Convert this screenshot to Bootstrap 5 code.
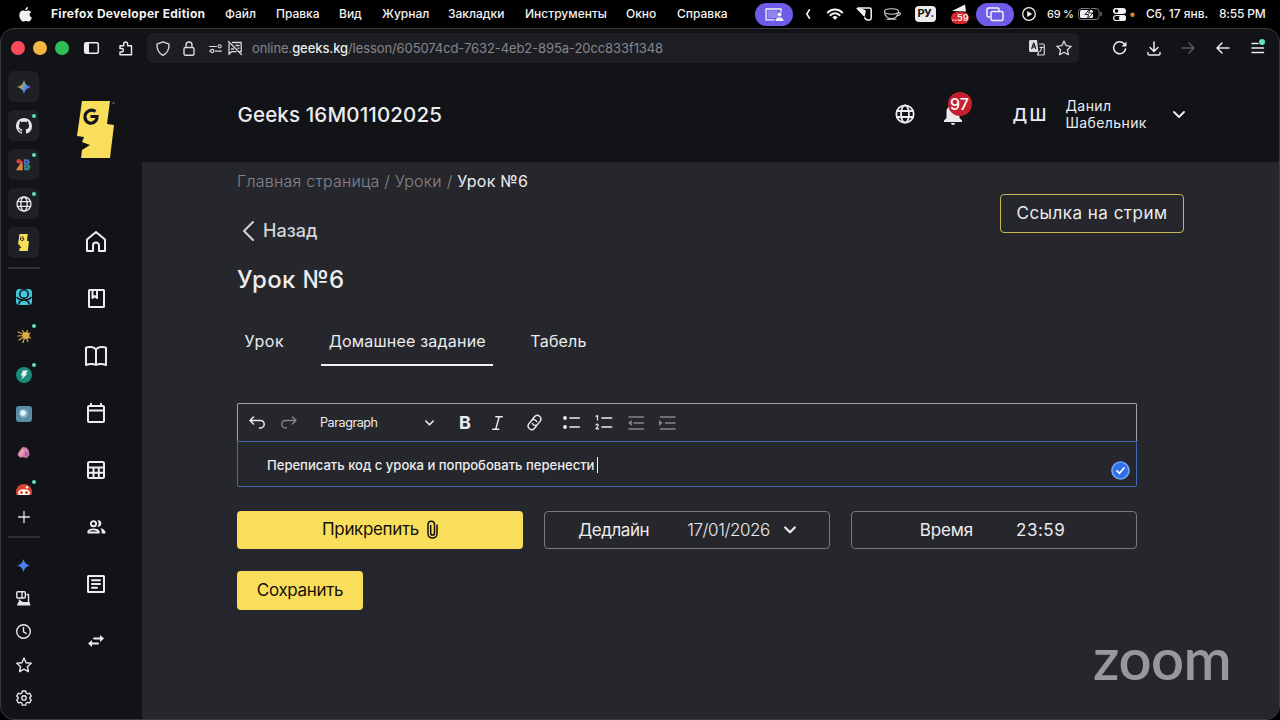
<!DOCTYPE html>
<html lang="ru">
<head>
<meta charset="utf-8">
<meta name="viewport" content="width=device-width, initial-scale=1">
<title>Geeks — Урок №6</title>
<link href="https://cdn.jsdelivr.net/npm/bootstrap@5.3.0/dist/css/bootstrap.min.css" rel="stylesheet">
<style>
  html, body { height: 720px; overflow: hidden; }
  body { background: #000; color: #ececee; font-family: Inter, "Liberation Sans", sans-serif; font-size: 14px; line-height: 1.2; }
  svg { display: block; flex: none; fill: none; stroke: currentColor; stroke-linecap: round; stroke-linejoin: round; overflow: visible; }
  .solid { fill: currentColor; stroke: none; }
  .flat { stroke: none; }
  .dim { color: #85868c; }
  .t { display: inline-block; white-space: nowrap; }

  /* system menu bar */
  .menubar { display: grid; height: 28px; padding-left: 19px; align-items: center; font-size: 12px; font-weight: 500; color: #f2f2f2;
    grid-template-columns: 32px 174px 51px 63px 43px 66px 77px 101px 51px 78px 50px 22px 29px 28px 31px 36px 25px 46px 25px 31px 35px 33px 73px 1fr; }
  .appname { font-weight: 700; letter-spacing: .3px; }
  .charge { font-size: 11px; letter-spacing: -.3px; }
  .clock { letter-spacing: -.2px; }
  .pill { width: 38px; height: 23px; border-radius: 12px; background: #6c5ce7; display: grid; place-items: center; }
  .lang { width: 21px; height: 16px; border-radius: 4px; background: #ececec; color: #111; font-size: 11px; font-weight: 700; display: grid; place-items: center; }
  .lang .t { letter-spacing: -.5px; }
  .flagico { width: 18px; height: 20px; }
  .flagico b { position: absolute; left: 0; bottom: 0; width: 18px; height: 12px; border-radius: 6px; background: #d8252e; font-size: 9px; line-height: 12px; text-align: center; font-weight: 600; }

  /* browser window */
  .win { height: 692px; border: 1px solid #3a3b40; border-radius: 14px; background: #121317; overflow: hidden; }
  .toolbar { display: grid; height: 38px; padding-left: 10px; align-items: center;
    grid-template-columns: 22px 22px 29px 35px 28px 966px 34px 34px 35px 35px 1fr; }
  .light { width: 14px; height: 14px; border-radius: 50%; }
  .light.r { background: #fb4b5a; }
  .light.y { background: #f4b63f; }
  .light.g { background: #2fbe55; }
  .urlbox { width: 932px; height: 30px; border-radius: 6px; background: #1d1e23; display: grid; align-items: center; padding-left: 9px;
    grid-template-columns: 27px 26px 19px 24px 777px 27px 1fr; color: #d9d9dd; }
  .url { font-size: 13px; color: #85868c; letter-spacing: -.09px; }
  .url b { color: #ececee; font-weight: 500; }

  .tabstrip { width: 45px; color: #e6e6ea; }
  .cell { height: 39px; display: grid; place-items: center; position: relative; }
  .cell.low { height: 33px; }
  .tile { width: 31px; height: 31px; border-radius: 6px; background: #1f2025; display: grid; place-items: center; }
  .dot { position: absolute; right: 10px; top: 8px; width: 4px; height: 4px; border-radius: 50%; background: #5fe0b0; }
  .rule { height: 2px; width: 32px; margin: 5px auto 7px; background: #303137; }
  .rule.second { margin: 0 auto 11px; }
  .pinned { height: 218px; overflow: hidden; margin-top: 8px; margin-bottom: 2px; }

  .sitenav { width: 96px; padding-left: 4px; padding-top: 33px; }
  .sitenav .logo { margin: 0 auto 54px; }
  .navcell { height: 57.1px; display: grid; place-items: center; }

  .sitehead { height: 95px; padding-left: 95.5px; font-weight: 500;
    display: grid; grid-template-columns: 657px 49px 69px 53px 107px 1fr; align-items: center; }
  .sitehead > svg:first-of-type { margin-bottom: 2px; }
  .group-name { font-size: 20.5px; letter-spacing: .14px; padding-top: 1px; }
  .initials { font-size: 17.5px; word-spacing: -.5px; letter-spacing: -.9px; }
  .person { font-size: 14px; line-height: 17px; font-weight: 400; letter-spacing: .4px; padding-bottom: 2px; }
  .count { position: absolute; left: 4px; top: -13px; width: 24px; height: 24px; border-radius: 50%; background: #c4202f; color: #fff; font-size: 16px; line-height: 24px; text-align: center; }

  .board { background: #26272c; padding: 9px 0 0 95px; height: 558px; }
  .crumb-line { height: 20px; font-weight: 300; font-size: 16px; color: #85868c; line-height: 20px; letter-spacing: .23px; }
  .crumb-line .now { color: #ececee; font-weight: 400; }
  .toprow { height: 73px; width: 947px; display: flex; justify-content: space-between; align-items: flex-start; }
  .stream, .stream:hover { margin-top: 3px; width: 184px; height: 39px; border: 1.5px solid #c9b456; border-radius: 4px; color: #ececee; font-size: 17px; padding: 0; letter-spacing: .48px; }
  .back { margin-top: 29px; color: #d4d4d8; font-size: 18px; font-weight: 500; padding-left: 6px; gap: 9px; line-height: 22px; }
  .lesson { font-size: 24px; font-weight: 500; line-height: 31px; margin: 0; height: 60px; letter-spacing: .35px; }
  .tabsrow { gap: 29.5px; font-size: 16px; letter-spacing: .2px; }
  .tabsrow .tabx { padding: 7px 7.5px 0; height: 42px; line-height: 20px; border-bottom: 2px solid transparent; }
  .tabsrow .tabx:first-child { letter-spacing: .55px; }
  .tabsrow .on { border-color: #f2f2f2; }

  .editor { width: 900px; margin-top: 37.4px; }
  .tools { height: 38px; border: 1px solid #a3a4a8; border-bottom: 0; border-radius: 2px 2px 0 0; padding-left: 11px; display: grid; align-items: center;
    grid-template-columns: 32px 39px 105px 34px 33px 35px 35.5px 32px 33px 31.5px 1fr; }
  .style-name { font-size: 12.6px; letter-spacing: -.45px; }
  .bold-mark { font-size: 18px; font-weight: 700; line-height: 18px; }
  .pane { height: 46px; border: 1.5px solid #4468b4; border-radius: 0 0 2px 2px; padding-left: 29px; padding-top: 2px; font-weight: 500; font-size: 13.05px; position: relative; }
  .caret { width: 1px; height: 16px; background: #f2f2f2; margin-left: 3px; }
  .ok { position: absolute; right: 6px; bottom: 6px; }
  .fields { display: grid; grid-template-columns: repeat(3, 286px); width: 900px; gap: 21px; margin-top: 23.2px; font-size: 17px; letter-spacing: -.42px; }
  .fieldx { height: 38.5px; border-radius: 4px; border: 1.5px solid #77787d; display: flex; align-items: center; justify-content: center; }
  .date { font-weight: 300; margin: 0 14px 0 38px; }
  .fieldx.time { padding-right: 3px; letter-spacing: -.15px; }
  .hours { margin-left: 43px; letter-spacing: .5px; }
  .yellow, .yellow:hover { background: #f9de5b; border: 0; color: #14110a; font-size: 17px; border-radius: 4px; padding: 0; letter-spacing: -.35px; }
  .save { width: 126px; height: 38.5px; margin-top: 22.2px; }
  .watermark { position: absolute; right: 49px; bottom: 33px; font-family: Lato, Inter, sans-serif; font-weight: 600; font-size: 58px; line-height: 58px; color: #97989d; letter-spacing: -.6px; }
</style>
</head>
<body>

<svg width="0" height="0" class="position-absolute">
  <defs>
    <g id="face">
      <path fill="#f9de5b" stroke="none" d="M5 0h28l-3 23 7 1-4 33H4l1-8 8-5-8-3 2-5-7-1z"/>
      <path stroke="#15151a" stroke-width="3.200" stroke-linecap="butt" stroke-linejoin="miter" d="M18.500 10.500C14 7 7.500 11 8 16.500s7 8 11 3c.8-1 1-2.500 1-4h-6.500"/>
    </g>
    <g id="globe"><circle cx="10" cy="10" r="8.700"/><ellipse cx="10" cy="10" rx="4" ry="8.700"/><path d="M1.800 7h16.400M1.800 13h16.400"/></g>
    <path id="star" d="M8 1l2.100 4.700 5.100.6-3.800 3.400 1 5L8 12.200l-4.400 2.500 1-5L.8 6.300l5.100-.6z"/>
    <path id="spark" d="M7 0c.9 4 3 6.100 7 7-4 .9-6.100 3-7 7-.9-4-3-6.100-7-7 4-.9 6.100-3 7-7z"/>
    <linearGradient id="gem" x1="0.100" y1="0.200" x2="0.900" y2="0.600"><stop offset="0" stop-color="#e8703e"/><stop offset=".3" stop-color="#b5a45c"/><stop offset=".5" stop-color="#6f9fb4"/><stop offset=".75" stop-color="#4387f4"/><stop offset="1" stop-color="#8b6bd6"/></linearGradient>
  </defs>
</svg>

<header class="menubar">
  <svg class="solid" width="13" height="15" viewBox="0 0 13 15"><path d="M9 0c.2 1.700-1.200 3.300-2.700 3.200C6.100 1.700 7.500.2 9 0zM6.500 4.100c.7 0 1.600-.8 2.900-.7 1.200.1 2.200.6 2.800 1.500-2.400 1.500-2 4.600.7 5.600-.6 1.900-1.900 4-3.200 4-1 0-1.500-.6-2.700-.6s-1.700.6-2.700.6C2.500 14.500.3 11.300.3 8.200c0-3 1.800-4.800 3.600-4.800 1.200 0 2 .7 2.600.7z"/></svg>
  <span><span class="t appname">Firefox Developer Edition</span></span>
  <span><span class="t">Файл</span></span><span><span class="t">Правка</span></span><span><span class="t">Вид</span></span><span><span class="t">Журнал</span></span>
  <span><span class="t">Закладки</span></span><span><span class="t">Инструменты</span></span><span><span class="t">Окно</span></span><span><span class="t">Справка</span></span>
  <span class="pill"><svg width="18" height="13" viewBox="0 0 18 13" stroke-width="1.300"><path d="M9 11.800H1V1h15v3"/><rect x="2.500" y="2.500" width="10" height="7.500" fill="#9186ee" stroke="none"/><g class="solid"><circle cx="14.500" cy="6.600" r="2"/><path d="M10.500 13c0-5 8-5 8 0z"/></g></svg></span>
  <svg width="6" height="10" viewBox="0 0 6 10" stroke-width="1.600"><path d="M4.500.8L1.800 5l2.700 4.200"/></svg>
  <svg width="16" height="12" viewBox="0 0 16 12" stroke-width="2" stroke-linecap="butt"><path d="M.8 4.500a10.300 10.300 0 0 1 14.400 0M3.400 7.200a6.600 6.600 0 0 1 9.200 0"/><path class="solid" d="M8 12L5.400 9.300a3.800 3.800 0 0 1 5.200 0z"/></svg>
  <svg width="16" height="14" viewBox="0 0 16 14" stroke-width="1.500"><path d="M2 .9h11.500a1.700 1.700 0 0 1 1.700 1.700v8.700a1.700 1.700 0 0 1-1.700 1.700h-1.700c-1.500 0-2.300-.8-3-2"/><path class="solid" d="M.2 1.500C1.500.3 3 .7 5 1.500l3.500 1.300c1 .4 1.500 1.200 1.200 2.200L8.500 10z"/></svg>
  <svg width="17" height="12" viewBox="0 0 17 12" stroke-width="1.100" color="#d0d0d0"><ellipse cx="7.500" cy="3.500" rx="7" ry="2.700"/><path d="M.5 3.500c0 9.500 14 9.500 14 0M14 5c4-1 3 3-1.500 2.800M3 11.300h9"/></svg>
  <span class="lang"><span class="t">РУ.</span></span>
  <span class="flagico position-relative"><svg class="solid" width="17" height="8" viewBox="0 0 17 8"><path d="M1 7L14 .5l1 7z"/></svg><b>..59</b></span>
  <span class="pill"><svg width="18" height="15" viewBox="0 0 18 15" stroke-width="1.500"><path d="M4 10H2.500A1.500 1.500 0 0 1 1 8.500v-6A1.500 1.500 0 0 1 2.500 1h9A1.500 1.500 0 0 1 13 2.500V4"/><rect x="5" y="4.500" width="12" height="9" rx="1.500"/></svg></span>
  <svg width="14" height="14" viewBox="0 0 14 14" stroke-width="1.300"><circle cx="7" cy="7" r="6.300"/><path class="solid" d="M5.200 4l5 3-5 3z"/></svg>
  <span><span class="t charge">69 %</span></span>
  <svg width="24" height="12" viewBox="0 0 24 12"><rect x=".5" y=".5" width="20.500" height="11" rx="3" stroke="#77777b"/><path d="M23 4.500v3" stroke="#77777b" stroke-width="1.400"/><rect class="solid" x="2" y="2" width="13" height="8" rx="1.500"/><path d="M12 .5L7 6.500h3.500L9.500 11l5.500-6h-4z" fill="#fff" stroke="#000" stroke-width=".9"/></svg>
  <svg width="22" height="13" viewBox="0 0 22 13"><rect class="solid" x="0" y="0" width="13" height="6" rx="3"/><circle cx="3.500" cy="3" r="1.800" fill="#000" stroke="none"/><rect x=".6" y="7.500" width="11.800" height="5" rx="2.500" stroke-width="1.200"/><rect class="solid" x="6" y="7" width="7" height="6" rx="3"/><circle cx="19.500" cy="6.800" r="2.200" fill="#d8882a" stroke="none"/></svg>
  <span><span class="t">Сб, 17 янв.</span></span><span><span class="t clock">8:55 PM</span></span>
</header>

<div class="win">
  <div class="toolbar">
    <span class="light r"></span><span class="light y"></span><span class="light g"></span>
    <svg width="15" height="12" viewBox="0 0 15 12" stroke-width="1.500"><rect x=".7" y=".7" width="13.600" height="10.600" rx="1.500"/><path class="solid" d="M1 1h4v10H1z"/></svg>
    <svg width="14" height="15" viewBox="0 0 14 15" stroke-width="1.400"><path d="M1 13.800V11h1.500c2.500 0 2.500-3.500 0-3.500H1V4.700h3.700V3.200c0-2.900 3.900-2.900 3.900 0v1.500h3.900v9.100z"/></svg>
    <div class="urlbox">
      <svg width="14" height="15" viewBox="0 0 14 15" stroke-width="1.400"><path d="M7 .8l6 2.300c.2 5.500-1.500 9-6 11.200C2.500 12.100.8 8.600 1 3.100z"/></svg>
      <svg width="12" height="15" viewBox="0 0 12 15" stroke-width="1.400"><rect x="1" y="6.500" width="10" height="7.700" rx="1.500"/><path d="M3 6.300V4a3 3 0 0 1 6 0v2.300"/></svg>
      <svg width="13" height="9" viewBox="0 0 14 9" stroke-width="1.200"><path d="M.6 2.300H8M6.500 7.300h7M.6 7.300h.6"/><circle cx="11.500" cy="2.200" r="1.700"/><circle cx="3.500" cy="7.200" r="1.700"/></svg>
      <svg width="14" height="14" viewBox="0 0 14 14" stroke-width="1.300"><path d="M4.500 1.500h8.700v9.200H12M1 3v10.300l2.500-2.600H8M.5.500l13 13M8 4.500h3M10 7.200h1M3.500 8H5.500"/></svg>
      <span><span class="t url">online.<b>geeks.kg</b>/lesson/605074cd-7632-4eb2-895a-20cc833f1348</span></span>
      <svg width="16" height="16" viewBox="0 0 16 16" stroke-width="1.200"><path class="solid" d="M1.500 0H8l1.500 12H1.500A1.500 1.500 0 0 1 0 10.500v-9A1.500 1.500 0 0 1 1.500 0z"/><path d="M2.800 8.500L4.700 3l2 5.500M3.500 6.800H6" stroke="#1d1e23"/><path d="M10.500 4H14a1.300 1.300 0 0 1 1.300 1.300v8.400A1.300 1.300 0 0 1 14 15H8.500l1-2.500M11 7.300h3M12.500 7.300c0 2-.5 3.500-1.700 4.400"/></svg>
      <svg width="16" height="16" viewBox="0 0 16 16" stroke-width="1.300"><use href="#star"/></svg>
    </div>
    <svg width="14" height="14" viewBox="0 0 14 14" stroke-width="1.500"><path d="M12.500 8A6 6 0 1 1 11 2.700L12.300 4"/><path class="solid" d="M13.500.5v5h-5z"/></svg>
    <svg width="14" height="15" viewBox="0 0 14 15" stroke-width="1.500"><path d="M7 1v9M3 6.500l4 4 4-4M1 11.500v1.200A1.300 1.300 0 0 0 2.300 14h9.400a1.300 1.300 0 0 0 1.300-1.300v-1.200"/></svg>
    <svg width="14" height="12" viewBox="0 0 14 12" stroke-width="1.500" color="#57585e"><path d="M1 6h12M8 1l5 5-5 5"/></svg>
    <svg width="14" height="12" viewBox="0 0 14 12" stroke-width="1.500"><path d="M13 6H1M6 1L1 6l5 5"/></svg>
    <svg width="14" height="12" viewBox="0 0 14 12" stroke-width="1.500"><path d="M1 1.500h6M1 6h11.500M1 10.500h11.500"/><circle cx="11" cy="0" r="3" fill="#62e3b8" stroke="none"/></svg>
  </div>

  <div class="d-flex">
    <aside class="tabstrip">
      <div class="cell"><span class="tile"><svg width="14" height="14" viewBox="0 0 14 14"><use href="#spark" fill="url(#gem)" stroke="none"/></svg></span></div>
      <div class="cell"><span class="tile"><svg class="solid" width="16" height="16" viewBox="0 0 16 16"><path d="M8 0C3.580 0 0 3.580 0 8c0 3.540 2.290 6.530 5.470 7.590.4.070.55-.17.55-.38 0-.19-.01-.82-.01-1.490-2.010.37-2.530-.49-2.690-.94-.09-.23-.48-.94-.82-1.130-.28-.15-.68-.52-.01-.53.63-.01 1.080.58 1.230.82.72 1.210 1.870.87 2.330.66.070-.52.28-.87.51-1.070-1.780-.2-3.640-.89-3.640-3.950 0-.87.31-1.590.82-2.150-.08-.2-.36-1.020.08-2.120 0 0 .67-.21 2.200.82.64-.18 1.320-.27 2-.27s1.360.09 2 .27c1.530-1.040 2.200-.82 2.200-.82.44 1.100.16 1.920.08 2.120.51.56.82 1.270.82 2.150 0 3.070-1.870 3.750-3.650 3.950.29.25.54.73.54 1.480 0 1.070-.01 1.930-.01 2.200 0 .21.15.46.55.38A8.010 8.010 0 0 0 16 8c0-4.420-3.580-8-8-8z"/></svg></span><i class="dot"></i></div>
      <div class="cell"><span class="tile"><svg class="flat" width="15" height="13" viewBox="0 0 16 13"><circle cx="3" cy="3" r="2.500" fill="#e0443a"/><path fill="#c9483a" d="M7.500 1v11.500H5z"/><path fill="#d98a3c" d="M6.500 2.500v10H0z"/><path fill="#4b6fc8" d="M8.500 1H13l2 2.700-2 2.800H8.500z"/><path fill="#2f8a80" d="M8.500 6.500H14l1.500 3-2 3h-5z"/><path fill="#1f2025" d="M10.500 3h1.500v1.500h-1.500zM10.500 8.500H12V10h-1.500z"/></svg></span><i class="dot"></i></div>
      <div class="cell"><span class="tile"><svg width="16" height="16" viewBox="0 0 20 20" stroke-width="1.700"><use href="#globe"/></svg></span><i class="dot"></i></div>
      <div class="cell"><span class="tile"><svg width="11" height="17" viewBox="0 0 37 57"><use href="#face"/></svg></span></div>
      <div class="rule"></div>
      <div class="pinned">
        <div class="cell"><svg width="16" height="16" viewBox="0 0 16 16"><rect width="16" height="16" rx="3.500" fill="#42c8dc" stroke="none"/><circle cx="8" cy="5" r="4.300" stroke="#121317" stroke-width="1.600"/><path d="M1 8.500c3 3.500 11 3.500 14 0M3 15c0-5 10-5 10 0" stroke="#121317" stroke-width="1.600"/></svg></div>
        <div class="cell"><svg width="14" height="14" viewBox="0 0 14 14" color="#d9ae45" stroke-width="1.200"><circle class="solid" cx="9" cy="6.500" r="3.500"/><path d="M8 6L1 3M8 6.500L.7 7M8 7l-6 4M8 7l-2 6.500M8 6l3 6.500M8 6l5.500 3M8 6l5-2M8 6l2.500-4.500M8 6L5.500 1.500"/></svg><i class="dot"></i></div>
        <div class="cell"><svg class="flat" width="16" height="16" viewBox="0 0 16 16"><circle cx="8" cy="8" r="8" fill="#1c8a78"/><path fill="#e4f4ef" d="M7 3.500h5L9.700 6.700h1.800l-6.300 6L7 8.500H4.700z"/></svg><i class="dot"></i></div>
        <div class="cell"><svg class="flat" width="16" height="16" viewBox="0 0 16 16"><rect width="16" height="16" rx="3" fill="#5a8ca5"/><circle cx="7.500" cy="7.500" r="4.500" fill="#83b5c9"/><circle cx="7" cy="7" r="2.700" fill="#e6f7fb"/></svg></div>
        <div class="cell"><svg class="flat" width="13" height="13" viewBox="0 0 14 13"><path fill="#d77fae" d="M6 .5l4 .5 2.500 3 1 5-3 3.500-4-1L3 12 .5 9 2.500 5z"/><path fill="#ee9fa6" d="M6 2l2 3-3 6-3-3z"/><path fill="#a562a8" d="M9.500 5l3 3-3 4-1.500-3z"/></svg></div>
        <div class="cell"><svg class="flat" width="16" height="16" viewBox="0 0 16 16"><circle cx="8" cy="8" r="8" fill="#d9442f"/><ellipse cx="8" cy="9" rx="6" ry="3.800" fill="#fff"/><circle cx="5.500" cy="8.500" r="1.500" fill="#d9442f"/><circle cx="10.500" cy="8.500" r="1.500" fill="#d9442f"/><circle cx="11" cy="3.300" r="1.200" fill="#fff"/></svg><i class="dot"></i></div>
      </div>
      <div class="cell"><svg width="12" height="12" viewBox="0 0 12 12" stroke-width="1.300"><path d="M6 .5v11M.5 6h11"/></svg></div>
      <div class="rule second"></div>
      <div class="cell low"><svg width="13" height="13" viewBox="0 0 14 14"><use href="#spark" fill="#4a83ee" stroke="none"/></svg></div>
      <div class="cell low"><svg width="15" height="15" viewBox="0 0 15 15" stroke-width="1.400"><rect x=".8" y=".8" width="8.500" height="6.200" rx="1"/><path d="M6 1v6M3.500 9v3M11 3.500h1.500V11"/><path class="solid" d="M3.500 9v2.200H2L1 14.500h13.500l-1-3.500H7z"/></svg></div>
      <div class="cell low"><svg width="15" height="15" viewBox="0 0 15 15" stroke-width="1.400"><circle cx="7.500" cy="7.500" r="6.800"/><path d="M7.500 3.500v4.300l2.700 1.500"/></svg></div>
      <div class="cell low"><svg width="16" height="16" viewBox="0 0 16 16" stroke-width="1.400"><use href="#star"/></svg></div>
      <div class="cell low"><svg width="16" height="16" viewBox="0 0 16 16" stroke-width="1.400"><path d="M6.300 1h3.400l.5 2 1.400.8 2-.6 1.700 2.900-1.500 1.500v1l1.500 1.400-1.700 2.900-2-.6-1.400.8-.5 2H6.300l-.5-2-1.400-.8-2 .6L.7 10l1.500-1.400v-1L.7 6.100l1.700-2.900 2 .6L5.800 3z"/><circle cx="8" cy="8" r="2.200"/></svg></div>
    </aside>

    <nav class="sitenav">
      <svg class="logo" width="38" height="59" viewBox="0 -1 38 59"><use href="#face"/><circle cx="36.500" cy="2" r="1.200" fill="#55554a" stroke="none"/></svg>
      <div class="navcell"><svg width="22" height="21" viewBox="0 0 22 21" stroke-width="2"><path d="M2 8.500L11 1l9 7.500V20h-6v-5.500a3 3 0 0 0-6 0V20H2z"/></svg></div>
      <div class="navcell"><svg width="17" height="19" viewBox="0 0 17 19" stroke-width="2"><rect x="1" y="1" width="15" height="17" rx=".5"/><path d="M4.500 1v8l2.300-2L9 9V1"/></svg></div>
      <div class="navcell"><svg width="22" height="20" viewBox="0 0 22 20" stroke-width="2"><path d="M11 3.500C9 .7 4 .3 1 1.700V19c3-1.300 8-1.200 10 0 2-1.200 7-1.300 10 0V1.700C18 .3 13 .7 11 3.500zV19"/></svg></div>
      <div class="navcell"><svg width="18" height="20" viewBox="0 0 18 20" stroke-width="2"><rect x="1" y="3" width="16" height="16" rx="1"/><path d="M1 7.500h16M4 .8V3M14 .8V3"/></svg></div>
      <div class="navcell"><svg width="18" height="18" viewBox="0 0 18 18" stroke-width="2"><rect x="1" y="1" width="16" height="16" rx="1.500"/><path d="M1 6.500h16M1 11.800h16M6.500 6.500V17M11.800 6.500V17"/></svg></div>
      <div class="navcell"><svg width="19" height="14" viewBox="0 0 19 14" stroke-width="1.900"><circle cx="6.500" cy="3.700" r="2.600"/><path d="M1.200 12.500c0-4.200 10.600-4.200 10.600 0z"/><g class="solid"><path d="M10.500.5c5-1.300 5.300 7.300 0 6.300 1.500-2 1.500-4.300 0-6.300zM13.500 8.300c3 .6 5 2 5 5.200h-3.800c0-2.500-.2-3.800-1.200-5.200z"/></g></svg></div>
      <div class="navcell"><svg width="18" height="18" viewBox="0 0 18 18" stroke-width="2"><rect x="1" y="1" width="16" height="16" rx=".5"/><path d="M5 5.200h8M5 9h8M5 12.700h5"/></svg></div>
      <div class="navcell"><svg width="16" height="12" viewBox="0 0 16 12" stroke-width="1.900" stroke-linecap="butt"><path d="M6 3.500h7M3 8.500h7"/><path class="solid" d="M12 0l4 3.500L12 7zM4 5v7L0 8.500z"/></svg></div>
    </nav>

    <main class="flex-grow-1">
      <div class="sitehead">
        <span><span class="t group-name">Geeks 16M01102025</span></span>
        <svg width="20" height="20" viewBox="0 0 20 20" stroke-width="1.800"><use href="#globe"/></svg>
        <span class="position-relative"><svg class="solid" width="18" height="20" viewBox="0 0 18 20"><path d="M9 0c-4 .5-6.500 3-6.500 7v6L0 15.500V17h18v-1.500L15.500 13V7c0-4-2.500-6.500-6.500-7zM7 18h4c0 2.500-4 2.500-4 0z"/></svg><span class="count">97</span></span>
        <span><span class="t initials">Д Ш</span></span>
        <span class="person"><span class="t">Данил</span><br><span class="t">Шабельник</span></span>
        <svg width="12" height="7" viewBox="0 0 12 7" stroke-width="1.900"><path d="M1 1l5 5 5-5"/></svg>
      </div>

      <div class="board">
        <div class="crumb-line"><span class="t">Главная страница / Уроки /</span> <span class="t now">Урок №6</span></div>
        <div class="toprow">
          <a class="back d-flex align-items-center text-decoration-none"><svg width="11" height="22" viewBox="0 0 11 22" stroke-width="2"><path d="M10 2L1 11l9 9"/></svg><span class="t">Назад</span></a>
          <button class="btn stream"><span class="t">Ссылка на стрим</span></button>
        </div>
        <h1 class="lesson"><span class="t">Урок №6</span></h1>
        <div class="tabsrow d-flex">
          <span class="tabx"><span class="t">Урок</span></span><span class="tabx on"><span class="t">Домашнее задание</span></span><span class="tabx"><span class="t">Табель</span></span>
        </div>

        <div class="editor">
          <div class="tools">
            <svg width="16" height="13" viewBox="0 0 16 13" stroke-width="1.500"><path d="M4.500 1L1 4.500 4.500 8M1.500 4.500h10a3.700 3.700 0 0 1 0 7.400h-1"/></svg>
            <svg class="dim" width="16" height="13" viewBox="0 0 16 13" stroke-width="1.400"><path d="M11.500 1L15 4.500 11.500 8M14.500 4.500h-10a3.700 3.700 0 0 0 0 7.400h1"/></svg>
            <span><span class="t style-name">Paragraph</span></span>
            <svg width="9" height="6" viewBox="0 0 9 6" stroke-width="1.600"><path d="M.8 1l3.700 3.700L8.200 1"/></svg>
            <span class="bold-mark">B</span>
            <svg width="11" height="14" viewBox="0 0 11 14" stroke-width="1.400"><path d="M3.800.7h6.500M.7 13.300h6M7.200.7L3.700 13.300"/></svg>
            <svg width="15" height="15" viewBox="0 0 15 15" stroke-width="1.400"><path d="M5.400 4.200l2.300-2.700c3-3.200 8 .9 5.500 4.600L10.700 9.300c-1.700 1.900-4.500 1.300-5.300-.8M9.600 10.800l-2.300 2.700c-3 3.200-8-.9-5.500-4.600L4.300 5.700C6 3.800 8.800 4.400 9.600 6.500"/></svg>
            <svg width="17" height="13" viewBox="0 0 17 13" stroke-width="1.700"><path d="M7 2h9.200M7 11h9.200"/><circle class="solid" cx="2" cy="2" r="1.900"/><circle class="solid" cx="2" cy="11" r="1.900"/></svg>
            <svg width="17" height="15" viewBox="0 0 17 15" stroke-width="1.700"><path d="M7 3h9.500M7 12h9.500"/><path stroke-width="1.200" d="M1 1.300L2.500.6V5M1 9.800c1-1.200 2.600-.5 2.200.7L1 13.800h2.700"/></svg>
            <svg class="dim" width="16" height="14" viewBox="0 0 16 14" stroke-width="1.500"><path d="M1 1h14.500M6 7h9.500M1 13h14.500"/><path class="solid" d="M3.700 4v6L0 7z"/></svg>
            <svg class="dim" width="17" height="14" viewBox="0 0 17 14" stroke-width="1.500"><path d="M1.500 1H16M6.500 7H16M1.500 13H16"/><path class="solid" d="M0 4v6l3.700-3z"/></svg>
          </div>
          <div class="pane d-flex align-items-center">
            <span class="t">Переписать код с урока и попробовать перенести</span><i class="caret"></i>
            <svg class="ok" width="19" height="19" viewBox="0 0 19 19"><circle cx="9.500" cy="9.500" r="8.500" fill="#2f70e6" stroke="#72a5f4" stroke-width="1.700"/><path d="M6 9.800l2.500 2.500L13 7" stroke="#fff" stroke-width="1.700"/></svg>
          </div>
        </div>

        <div class="fields">
          <button class="btn yellow fieldx"><span class="t">Прикрепить</span><svg class="ms-2" width="11" height="19" viewBox="0 0 11 19" stroke-width="1.500"><path d="M10 5v8.500c0 6-9 6-9 0V4.500C1 .3 7.500.3 7.500 4.500v8.700c0 2.500-3.800 2.500-3.800 0V5.500"/></svg></button>
          <div class="fieldx"><span class="t">Дедлайн</span><span class="t date">17/01/2026</span><svg width="12" height="8" viewBox="0 0 12 8" stroke-width="2.200"><path d="M1.200 1.500L6 6.300l4.800-4.800"/></svg></div>
          <div class="fieldx time"><span class="t">Время</span><span class="t hours">23:59</span></div>
        </div>
        <button class="btn yellow save"><span class="t">Сохранить</span></button>
      </div>
    </main>
  </div>
</div>
<div class="watermark"><span class="t">zoom</span></div>
<script src="https://cdn.jsdelivr.net/npm/bootstrap@5.3.0/dist/js/bootstrap.bundle.min.js"></script>
</body>
</html>
